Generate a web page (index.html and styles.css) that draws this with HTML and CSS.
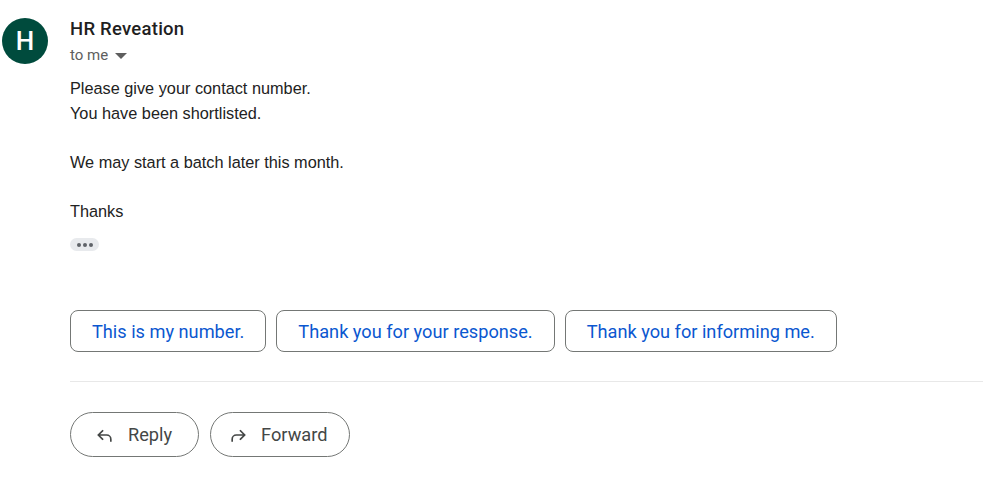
FILE: index.html
```html
<!DOCTYPE html>
<html>
<head>
<meta charset="utf-8">
<link rel="stylesheet" href="styles.css">
</head>
<body>
<div class="message">
  <div class="avatar-col">
    <div class="avatar">H</div>
  </div>
  <div class="main">
    <div class="sender">HR Reveation</div>
    <div class="recipient">to me <span class="caret"></span></div>
    <div class="body">
      <div>Please give your contact number.</div>
      <div>You have been shortlisted.</div>
      <div class="blank"></div>
      <div>We may start a batch later this month.</div>
      <div class="blank"></div>
      <div>Thanks</div>
    </div>
    <div class="more"><span></span><span></span><span></span></div>
    <div class="chips">
      <button class="chip">This is my number.</button>
      <button class="chip">Thank you for your response.</button>
      <button class="chip">Thank you for informing me.</button>
    </div>
    <div class="divider"></div>
    <div class="actions">
      <button class="action reply">
        <svg width="20" height="20" viewBox="0 0 24 24"><path d="M9 7 4 12l5 5M4.5 12H14a5 5 0 0 1 5 5v2" fill="none" stroke="#444746" stroke-width="2" stroke-linecap="square"/></svg>
        <span>Reply</span>
      </button>
      <button class="action forward">
        <svg width="20" height="20" viewBox="0 0 24 24"><path d="M15 7l5 5-5 5M19.5 12H10a5 5 0 0 0-5 5v2" fill="none" stroke="#444746" stroke-width="2" stroke-linecap="square"/></svg>
        <span>Forward</span>
      </button>
    </div>
  </div>
</div>
</body>
</html>
```

FILE: styles.css
```css
* { box-sizing: border-box; }
body {
  margin: 0;
  background: #fff;
  font-family: "Liberation Sans", Arial, sans-serif;
  color: #222;
}
.message {
  display: flex;
  padding-top: 18px;
}
.avatar-col {
  width: 70px;
  flex: none;
  padding-left: 2px;
}
.avatar {
  width: 46px;
  height: 46px;
  border-radius: 50%;
  background: #004b3d;
  color: #fff;
  font-family: "Roboto", sans-serif;
  font-size: 26px;
  font-weight: 500;
  display: flex;
  align-items: center;
  justify-content: center;
}
.main {
  flex: 1;
  min-width: 0;
}
.sender {
  font-family: "Roboto", sans-serif;
  font-weight: 500;
  font-size: 18.5px;
  letter-spacing: 0.25px;
  color: #1f1f1f;
  line-height: 22px;
}
.recipient {
  margin-top: 5px;
  font-family: "Roboto", sans-serif;
  font-size: 15px;
  color: #5e5e5e;
  line-height: 20px;
  display: flex;
  align-items: center;
  gap: 7px;
}
.caret {
  width: 0;
  height: 0;
  border-left: 6px solid transparent;
  border-right: 6px solid transparent;
  border-top: 6px solid #5e5e5e;
  margin-top: 1px;
}
.body {
  margin-top: 11px;
  font-size: 16.3px;
  line-height: 24.5px;
  color: #222;
}
.blank { height: 24.5px; }
.more {
  margin-top: 15px;
  width: 29px;
  height: 13px;
  border-radius: 7px;
  background: #e8eaed;
  display: flex;
  align-items: center;
  justify-content: center;
  gap: 2px;
}
.more span {
  width: 4px;
  height: 4px;
  border-radius: 50%;
  background: #5f6368;
}
.chips {
  margin-top: 59px;
  display: flex;
  gap: 10px;
}
.chip {
  height: 42px;
  padding: 0 21px;
  border: 1px solid #747775;
  border-radius: 8px;
  background: #fff;
  color: #0b57d0;
  font-family: "Roboto", sans-serif;
  font-size: 18.2px;
  cursor: pointer;
}
.divider {
  margin-top: 29px;
  height: 1px;
  background: #e8e8e8;
}
.actions {
  margin-top: 30px;
  display: flex;
  gap: 11px;
}
.action {
  height: 45px;
  border: 1px solid #747775;
  border-radius: 23px;
  background: #fff;
  color: #444746;
  font-family: "Roboto", sans-serif;
  font-size: 18.2px;
  display: flex;
  align-items: center;
  gap: 13px;
}
.action.reply { padding: 0 26px 0 24px; }
.action.forward { padding: 0 22px 0 17px; }
.action svg { flex: none; }
```
